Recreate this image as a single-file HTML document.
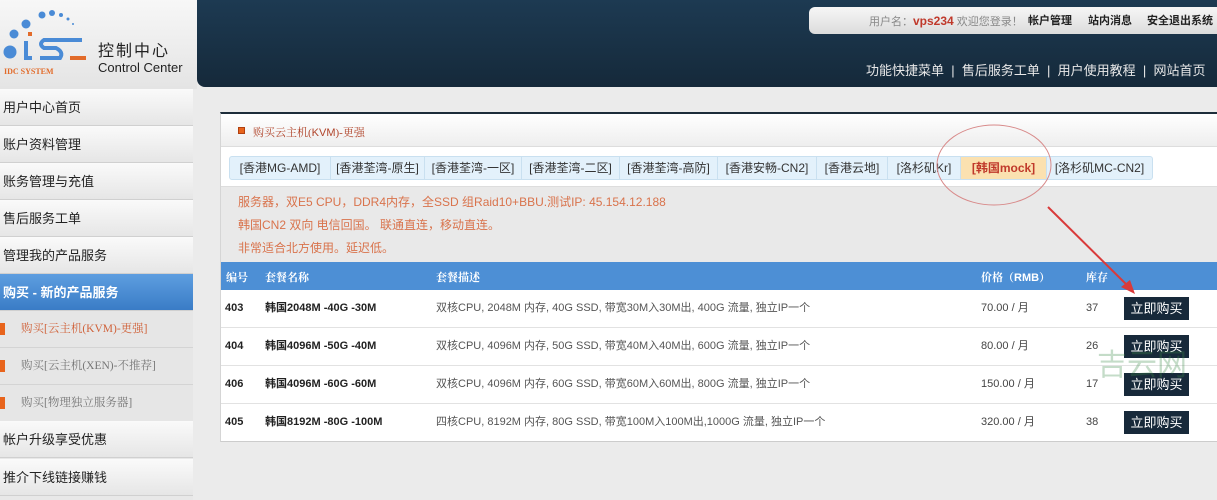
<!DOCTYPE html>
<html><head><meta charset="utf-8"><style>
*{margin:0;padding:0;box-sizing:border-box}
body{width:1217px;height:500px;overflow:hidden;background:#ebebeb;font-family:"Liberation Sans","Noto Sans CJK SC",sans-serif;position:relative}
.a{position:absolute}
.hdr{left:197px;top:0;width:1020px;height:87px;background:linear-gradient(#1d3a52,#15293a);border-radius:0 0 0 8px}
.logoarea{left:0;top:0;width:197px;height:89px;background:linear-gradient(#f7f7f7,#e4e4e4)}
.side{left:0;top:89px;width:193px;height:411px;background:#e8e8e8}
.mi{position:absolute;left:0;width:193px;height:37px;font-size:13px;line-height:37px;padding-left:3px;color:#222;background:linear-gradient(#fafafa,#e6e6e6);border-bottom:1px solid #d0d0d0}
.mi.act{background:linear-gradient(#5e9ee0,#3a7cc6);color:#fff;font-weight:bold}
.sub{position:absolute;left:0;width:193px;height:37px;font-size:11.5px;line-height:37px;padding-left:21px;color:#777;background:#e6e6e6;border-bottom:1px solid #d4d4d4;font-family:"Liberation Serif","Noto Serif CJK SC",serif}
.sub:before{content:"";position:absolute;left:0;top:12px;width:5px;height:12px;background:#e8641c}
.panel{left:220px;top:112px;width:997px;height:330px;background:#fff;border-top:2px solid #1d2d3a;border-left:1px solid #d5d5d5;border-bottom:1px solid #ccc}
.tabs{left:229px;top:156px;height:24px;display:flex;border:1px solid #c9e0f0;border-radius:3px;background:#e3f1fb}
.tab{font-size:12px;color:#333;line-height:22px;text-align:center;border-right:1px solid #c9e0f0;white-space:nowrap}
.th{left:221px;top:262px;width:996px;height:28px;background:#4d8fd5;color:#fff;font-weight:bold;font-size:11px;font-family:"Liberation Serif","Noto Serif CJK SC",serif}
.row{position:absolute;left:221px;width:996px;height:38px;border-bottom:1px solid #e2e2e2;font-size:11px;color:#222;line-height:37px}
.row span{position:absolute;top:0;white-space:nowrap}
.btn{position:absolute;left:903px;top:7px;width:65px;height:23px;background:#17293a;color:#fff;font-size:13px;line-height:23px;text-align:center}
</style></head><body>
<div class="a logoarea">
<svg class="a" style="left:0;top:8px" width="95" height="70">
<circle cx="42" cy="7" r="3.5" fill="#4a8bd6"/><circle cx="52" cy="5" r="3" fill="#4a8bd6"/><circle cx="61" cy="7" r="2" fill="#4a8bd6"/><circle cx="68" cy="11" r="1.5" fill="#4a8bd6"/><circle cx="73" cy="16" r="1" fill="#4a8bd6"/>
<circle cx="26" cy="16" r="4.5" fill="#4a8bd6"/><circle cx="14" cy="26" r="4.5" fill="#4a8bd6"/><circle cx="10" cy="44" r="6.5" fill="#4a8bd6"/>
<rect x="28" y="24" width="4" height="4" fill="#e26b2a"/>
<path d="M26 33 L26 50 L32 50 M40 50 L60 50 Q64 44 56 40 L44 40 Q38 36 44 32 L82 32" stroke="#4a8bd6" stroke-width="4" fill="none"/>
<rect x="70" y="48" width="16" height="4" fill="#e26b2a"/>
<text x="4" y="66" font-size="8" font-weight="bold" fill="#e26b2a" font-family="Liberation Serif">IDC SYSTEM</text>
</svg>
<div class="a" style="left:98px;top:37px;font-size:16px;color:#222;letter-spacing:2px">控制中心</div>
<div class="a" style="left:98px;top:60px;font-size:13px;color:#222">Control Center</div>
</div>
<div class="a hdr"></div>
<div class="a" style="left:809px;top:7px;width:408px;height:27px;background:linear-gradient(#f6f6f6,#dcdcdc);border-radius:6px 0 0 6px;font-size:11px;line-height:28px;color:#888">
<span class="a" style="left:60px">用户名：<b style="color:#c0392b;font-size:12px">vps234</b> 欢迎您登录！</span>
<b class="a" style="left:219px;color:#222">帐户管理</b><b class="a" style="left:279px;color:#222">站内消息</b><b class="a" style="left:338px;color:#222">安全退出系统</b>
</div>
<div class="a" style="left:866px;top:60px;font-size:13px;color:#e8e8e8">功能快捷菜单 &nbsp;|&nbsp; 售后服务工单 &nbsp;|&nbsp; 用户使用教程 &nbsp;|&nbsp; 网站首页</div>
<div class="a side">
<div class="mi" style="top:0">用户中心首页</div>
<div class="mi" style="top:37px">账户资料管理</div>
<div class="mi" style="top:74px">账务管理与充值</div>
<div class="mi" style="top:111px">售后服务工单</div>
<div class="mi" style="top:148px">管理我的产品服务</div>
<div class="mi act" style="top:185px">购买 - 新的产品服务</div>
<div class="sub" style="top:222px;color:#d0623a">购买[云主机(KVM)-更强]</div>
<div class="sub" style="top:259px">购买[云主机(XEN)-不推荐]</div>
<div class="sub" style="top:296px">购买[物理独立服务器]</div>
<div class="mi" style="top:332px">帐户升级享受优惠</div>
<div class="mi" style="top:370px">推介下线链接赚钱</div>
</div>
<div class="a panel">
<div class="a" style="left:0;top:0;width:996px;height:33px;background:linear-gradient(#fff,#eee);border-bottom:1px solid #ddd"></div>
<div class="a" style="left:17px;top:13px;width:7px;height:7px;background:#e8641c;border:1px solid #b04010"></div>
<div class="a" style="left:32px;top:10px;font-size:11px;color:#b0442a;font-family:'Liberation Serif','Noto Serif CJK SC',serif">购买云主机(<span style="font-family:'Liberation Sans'">KVM</span>)-更强</div>
<div class="a" style="left:0;top:72px;width:996px;height:78px;background:#e9e9e9;border-top:1px solid #ddd"></div>
<div class="a" style="left:17px;top:77px;font-size:12px;line-height:23px;color:#d9734c">服务器，双E5 CPU，DDR4内存，全SSD 组Raid10+BBU.测试IP: 45.154.12.188<br>韩国CN2 双向 电信回国。 联通直连，移动直连。<br>非常适合北方使用。延迟低。</div>
</div>
<div class="a tabs">
<div class="tab" style="width:101px">[香港MG-AMD]</div>
<div class="tab" style="width:94px">[香港荃湾-原生]</div>
<div class="tab" style="width:97px">[香港荃湾-一区]</div>
<div class="tab" style="width:98px">[香港荃湾-二区]</div>
<div class="tab" style="width:98px">[香港荃湾-高防]</div>
<div class="tab" style="width:99px">[香港安畅-CN2]</div>
<div class="tab" style="width:71px">[香港云地]</div>
<div class="tab" style="width:73px">[洛杉矶Kr]</div>
<div class="tab" style="width:86px;background:#fbe1b0;color:#c0392b;font-weight:bold">[韩国mock]</div>
<div class="tab" style="width:105px;border-right:0">[洛杉矶MC-CN2]</div>
</div>
<div class="a th"><span class="a" style="left:5px;top:7px">编号</span><span class="a" style="left:44px;top:7px">套餐名称</span><span class="a" style="left:215px;top:7px">套餐描述</span><span class="a" style="left:760px;top:7px">价格（<span style="font-family:'Liberation Sans'">RMB</span>）</span><span class="a" style="left:865px;top:7px">库存</span></div>
<div class="row" style="top:290px"><span style="left:4px"><b>403</b></span><span style="left:44px"><b>韩国2048M -40G -30M</b></span><span style="left:215px;color:#555">双核CPU, 2048M 内存, 40G SSD, 带宽30M入30M出, 400G 流量, 独立IP一个</span><span style="left:760px;color:#444">70.00 / 月</span><span style="left:865px;color:#444">37</span><div class="btn">立即购买</div></div>
<div class="row" style="top:328px"><span style="left:4px"><b>404</b></span><span style="left:44px"><b>韩国4096M -50G -40M</b></span><span style="left:215px;color:#555">双核CPU, 4096M 内存, 50G SSD, 带宽40M入40M出, 600G 流量, 独立IP一个</span><span style="left:760px;color:#444">80.00 / 月</span><span style="left:865px;color:#444">26</span><div class="btn">立即购买</div></div>
<div class="row" style="top:366px"><span style="left:4px"><b>406</b></span><span style="left:44px"><b>韩国4096M -60G -60M</b></span><span style="left:215px;color:#555">双核CPU, 4096M 内存, 60G SSD, 带宽60M入60M出, 800G 流量, 独立IP一个</span><span style="left:760px;color:#444">150.00 / 月</span><span style="left:865px;color:#444">17</span><div class="btn">立即购买</div></div>
<div class="row" style="top:404px;border-bottom:0"><span style="left:4px"><b>405</b></span><span style="left:44px"><b>韩国8192M -80G -100M</b></span><span style="left:215px;color:#555">四核CPU, 8192M 内存, 80G SSD, 带宽100M入100M出,1000G 流量, 独立IP一个</span><span style="left:760px;color:#444">320.00 / 月</span><span style="left:865px;color:#444">38</span><div class="btn">立即购买</div></div>
<svg class="a" style="left:0;top:0" width="1217" height="500">
<ellipse cx="994" cy="165" rx="57" ry="40" fill="none" stroke="#d88a8a" stroke-width="1"/>
<line x1="1048" y1="207" x2="1130" y2="288" stroke="#d93a3a" stroke-width="2"/>
<path d="M1135 294 L1121 287 L1130 280 Z" fill="#d93a3a"/>
<text x="1097" y="375" font-size="30" fill="#3a8a4a" fill-opacity="0.3" font-family="Noto Sans CJK SC">吉云网</text>
</svg>
</body></html>
